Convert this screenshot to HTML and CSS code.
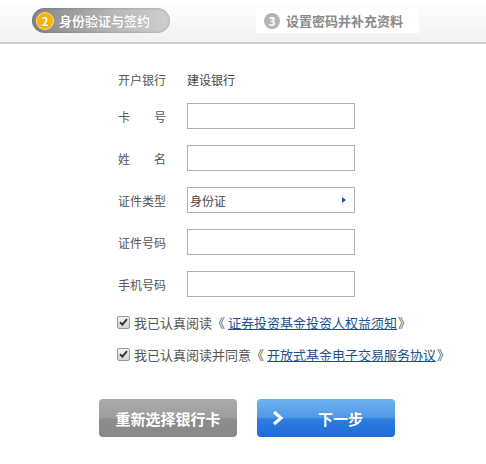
FILE: index.html
```html
<!DOCTYPE html>
<html lang="zh-CN">
<head>
  <meta charset="UTF-8" />
  <title>开户</title>
  <link rel="stylesheet" href="styles.css">
</head>
<body>
  <header class="steps">
    <div class="step step-on"><span class="num">2</span>身份验证与签约</div>
    <div class="step step-off"><span class="num">3</span>设置密码并补充资料</div>
  </header>

  <main class="form">
    <div class="row row-first">
      <label>开户银行</label>
      <span class="value">建设银行</span>
    </div>
    <div class="row">
      <label class="spread"><span>卡</span><span>号</span></label>
      <input type="text" class="field">
    </div>
    <div class="row">
      <label class="spread"><span>姓</span><span>名</span></label>
      <input type="text" class="field">
    </div>
    <div class="row">
      <label>证件类型</label>
      <div class="field select">身份证<span class="arrow"></span></div>
    </div>
    <div class="row">
      <label>证件号码</label>
      <input type="text" class="field">
    </div>
    <div class="row">
      <label>手机号码</label>
      <input type="text" class="field">
    </div>

    <div class="agree">
      <span class="check"><svg width="9" height="8" viewBox="0 0 9 8"><path d="M1 4.2 L3.4 6.6 L8 1.2" fill="none" stroke="#333" stroke-width="2"/></svg></span>
      <span>我已认真阅读《</span><a href="#">证券投资基金投资人权益须知</a><span>》</span>
    </div>
    <div class="agree">
      <span class="check"><svg width="9" height="8" viewBox="0 0 9 8"><path d="M1 4.2 L3.4 6.6 L8 1.2" fill="none" stroke="#333" stroke-width="2"/></svg></span>
      <span>我已认真阅读并同意《</span><a href="#">开放式基金电子交易服务协议</a><span>》</span>
    </div>

    <div class="buttons">
      <button class="btn btn-grey">重新选择银行卡</button>
      <button class="btn btn-blue">
        <svg class="chev" width="12" height="16" viewBox="0 0 12 16"><path d="M2 2 L9 8 L2 14" fill="none" stroke="#fff" stroke-width="3.2"/></svg>
        <span>下一步</span>
      </button>
    </div>
  </main>
</body>
</html>
```

FILE: styles.css
```css
body {
  margin: 0;
  background: #fff;
  font-family: "Noto Sans CJK SC", "DejaVu Sans", sans-serif;
  color: #555;
  font-size: 12px;
}

.steps {
  border-bottom: 2px solid #cfcfcf;
  background: linear-gradient(#ffffff, #f1f1f1);
  display: flex;
  align-items: flex-start;
  padding-top: 8px;
  box-sizing: border-box;
  height: 44px;
}

.step {
  display: flex;
  align-items: center;
  height: 25px;
  font-size: 13px;
  font-weight: bold;
  box-sizing: border-box;
}

.step .num {
  width: 16px;
  height: 16px;
  border-radius: 50%;
  display: inline-flex;
  align-items: center;
  justify-content: center;
  font-size: 12px;
  color: #fff;
  margin-right: 6px;
  line-height: 1;
}

.step-on {
  margin-left: 32px;
  width: 138px;
  border-radius: 13px;
  padding-left: 5px;
  color: #fff;
  background: linear-gradient(to right, #858585, #b9b9b9 60%, #cfcfcf);
  box-shadow: inset 0 0 3px rgba(0, 0, 0, 0.25);
  text-shadow: 0 0 1px rgba(0, 0, 0, 0.3);
}

.step-on .num {
  background: #f6b500;
  box-shadow: 0 0 0 1px #fbe08a;
}

.step-off {
  margin-left: 86px;
  width: 163px;
  padding-left: 8px;
  background: #fff;
  color: #8a8a8a;
}

.step-off .num {
  background: #b4b4b4;
}

.form {
  padding: 22px 0 0 118px;
}

.row {
  display: flex;
  align-items: center;
  height: 26px;
  margin-bottom: 16px;
}

.row-first {
  margin-bottom: 11px;
}

.row label {
  width: 48px;
  margin-right: 21px;
  color: #555;
}

.row label.spread {
  display: flex;
  justify-content: space-between;
}

.value {
  color: #444;
}

.field {
  width: 168px;
  height: 26px;
  box-sizing: border-box;
  border: 1px solid #b0b0b0;
  background: #fff;
  margin: 0;
  font-family: inherit;
  font-size: 12px;
}

.select {
  display: flex;
  align-items: center;
  padding-left: 2px;
  color: #444;
  position: relative;
}

.arrow {
  position: absolute;
  right: 8px;
  top: 9px;
  width: 0;
  height: 0;
  border-left: 4px solid #2d4c6e;
  border-top: 3.5px solid transparent;
  border-bottom: 3.5px solid transparent;
}

.form .row:last-of-type {
  margin-bottom: 16px;
}

.agree {
  display: flex;
  align-items: center;
  height: 18px;
  margin-bottom: 14px;
  font-size: 13px;
  color: #555;
}

.check {
  width: 11px;
  height: 11px;
  border: 1px solid #999;
  border-radius: 2px;
  background: linear-gradient(#f4f4f4, #d6d6d6);
  display: inline-flex;
  align-items: center;
  justify-content: center;
  margin-right: 4px;
  margin-left: -1px;
}

.agree a {
  color: #1c4f8f;
  text-decoration: underline;
  margin-left: 3px;
  margin-right: 1px;
}

.buttons {
  display: flex;
  gap: 20px;
  margin-left: -19px;
  margin-top: 36px;
}

.btn {
  width: 138px;
  height: 38px;
  border: none;
  border-radius: 4px;
  color: #fff;
  font-family: inherit;
  font-size: 15px;
  font-weight: bold;
  padding: 0;
}

.btn-grey {
  background: linear-gradient(#ababab, #9d9d9d 50%, #8d8d8d 52%, #888);
}

.btn-blue {
  display: flex;
  align-items: center;
  background: linear-gradient(#6db2ef, #4f98e6 50%, #2f7ee0 52%, #1d6bd6);
}

.chev {
  margin-left: 15px;
  margin-right: 34px;
}
```
